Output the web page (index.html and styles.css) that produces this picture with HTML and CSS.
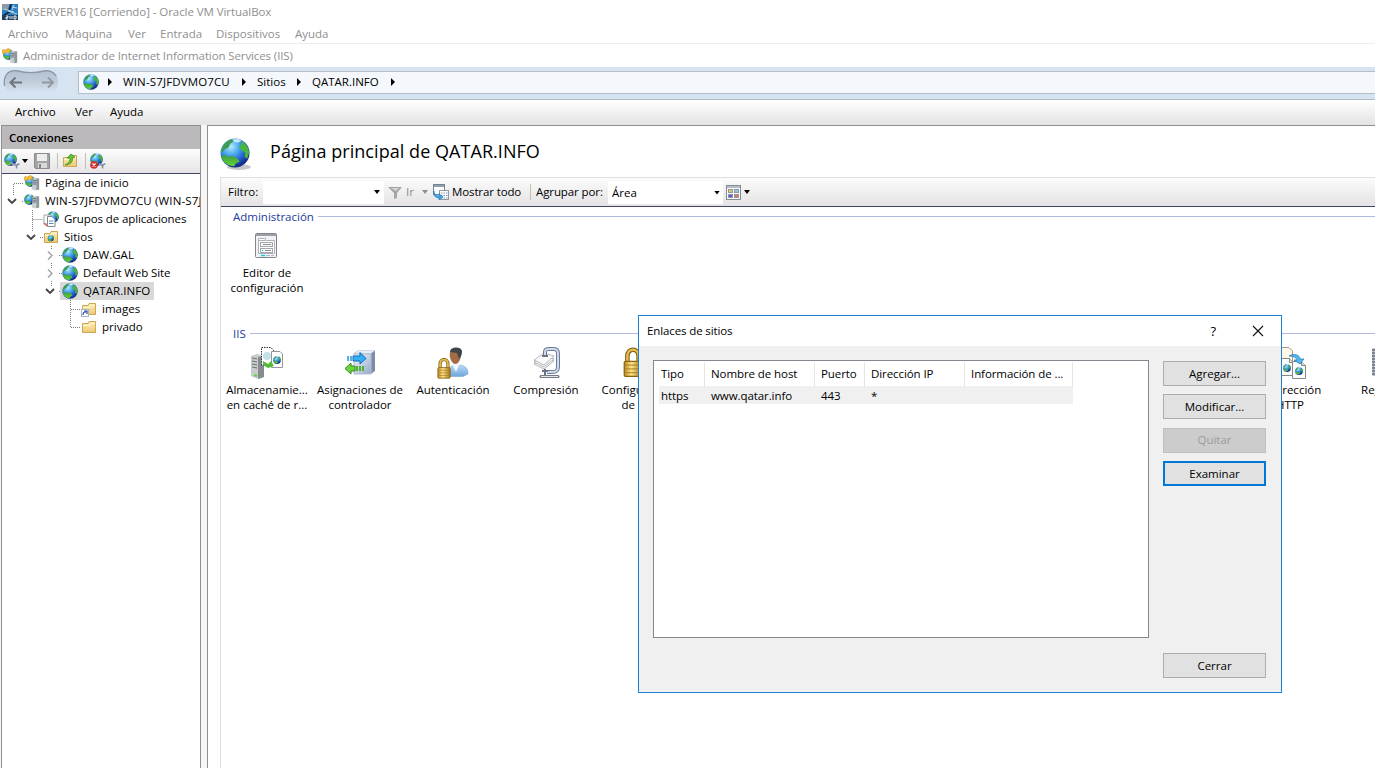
FILE: index.html
```html
<!DOCTYPE html>
<html lang="es">
<head>
<meta charset="utf-8">
<title>Administrador de Internet Information Services (IIS)</title>
<link rel="stylesheet" href="styles.css">
</head>
<body>
<svg class="defs" width="0" height="0" aria-hidden="true">
  <defs>
    <radialGradient id="sea" cx="36%" cy="28%" r="72%">
      <stop offset="0" stop-color="#b4ecff"/><stop offset=".4" stop-color="#4aa6ee"/><stop offset=".75" stop-color="#2357c8"/><stop offset="1" stop-color="#152c86"/>
    </radialGradient>
    <linearGradient id="land" x1="0" y1="0" x2="0" y2="1">
      <stop offset="0" stop-color="#3f9a4a"/><stop offset="1" stop-color="#5fd62f"/>
    </linearGradient>
    <linearGradient id="fold" x1="0" y1="0" x2="0" y2="1">
      <stop offset="0" stop-color="#fdeeb4"/><stop offset="1" stop-color="#ecca74"/>
    </linearGradient>
    <linearGradient id="gold" x1="0" y1="0" x2="1" y2="0">
      <stop offset="0" stop-color="#b98a1c"/><stop offset=".4" stop-color="#ffe58a"/><stop offset="1" stop-color="#a87712"/>
    </linearGradient>
    <linearGradient id="steel" x1="0" y1="0" x2="1" y2="1">
      <stop offset="0" stop-color="#f6f9fd"/><stop offset="1" stop-color="#93a7ca"/>
    </linearGradient>
    <linearGradient id="shirt" x1="0" y1="0" x2="0" y2="1">
      <stop offset="0" stop-color="#b9daf6"/><stop offset="1" stop-color="#6ea6dc"/>
    </linearGradient>
    <linearGradient id="nav" x1="0" y1="0" x2="0" y2="1">
      <stop offset="0" stop-color="#b3c0cf"/><stop offset=".5" stop-color="#c0cddb"/><stop offset="1" stop-color="#d9e5f2"/>
    </linearGradient>
    <symbol id="globe" viewBox="0 0 32 32">
      <circle cx="16" cy="16" r="15.500" fill="url(#sea)"/>
      <path d="M2 11C4 6 8 2 13 1L15 3 11 6 9 10 5 12 3 15 1 15Z" fill="#3f9a52"/>
      <path d="M1 19L6 18 8 20 13 19 19 22 21 25 17 27 15 30C8 30 3 26 1 19Z" fill="url(#land)"/>
      <path d="M23 3C28 6 31 11 31 16L29 22 26 20 27 16 23 13 20 9 23 7Z" fill="#48b53c"/>
      <path d="M13 1.500L20 1 23 3 19 5 15 4Z" fill="#e4f8ff" opacity=".8"/>
    </symbol>
    <symbol id="tower" viewBox="0 0 10 14">
      <path d="M2 1L6 0 9 1V13L5 14 1 13Z" fill="#c9cdd1"/>
      <path d="M6 1L9 1V13L6 14Z" fill="#8f969d"/>
      <path d="M2 3H6M2 5H6M2 7H6" stroke="#59626b"/>
      <path d="M7 11H8" stroke="#38d238" stroke-width="1.500"/>
    </symbol>
    <symbol id="site-server" viewBox="0 0 16 16">
      <use href="#globe" x="0" y="1" width="11" height="11"/>
      <use href="#tower" x="7" y="2" width="9" height="14"/>
    </symbol>
    <symbol id="home-server" viewBox="0 0 16 16">
      <use href="#globe" x="1" y="1" width="11" height="11"/>
      <use href="#tower" x="7" y="2" width="9" height="14"/>
      <path d="M0 3L1.500 1 3 2.500 6 .5 8.500 1.500 7 5 5 4 3 5 1 6Z" fill="#f7c13c" stroke="#cf8b18" stroke-width=".6"/>
    </symbol>
    <symbol id="folder" viewBox="0 0 16 16">
      <path d="M1.500 4.500H7L8 2.500H14.500V13.500H1.500Z" fill="url(#fold)" stroke="#cda656"/>
      <path d="M2 6.500H9L10 4.500H14" fill="none" stroke="#fff6d4"/>
    </symbol>
    <symbol id="lock" viewBox="0 0 16 24">
      <path d="M3.500 12V7C3.500 0 12.500 0 12.500 7V12" fill="none" stroke="#7c5a10" stroke-width="3.600"/>
      <path d="M3.500 12V7C3.500 0 12.500 0 12.500 7V12" fill="none" stroke="#e4bd4e" stroke-width="2"/>
      <rect x="1" y="11" width="14" height="12" rx="1" fill="url(#gold)" stroke="#8b6412"/>
      <path d="M2 14H14M2 17H14M2 20H14" stroke="#9f7620" opacity=".7"/>
    </symbol>
    <symbol id="doc-globe" viewBox="0 0 14 18">
      <path d="M.5.5H9.500L13.500 4.500V17.500H.5Z" fill="#fbfbfb" stroke="#85888c"/>
      <path d="M9.500.5V4.500H13.500" fill="#ddd" stroke="#85888c"/>
      <use href="#globe" x="3" y="6" width="8" height="8"/>
    </symbol>
  </defs>
</svg>

<header class="vm-title">
  <svg width="16" height="16" viewBox="0 0 16 16"><rect width="16" height="16" fill="#2e7fc0"/><path d="M0 0H8L5 6H0Z" fill="#8b9aa6"/><path d="M9 0L7 8 1 12" stroke="#0d2c4d" stroke-width="2" fill="none"/><path d="M6 7L15 10M10 3L15 4M2 5L12 8M12 1L10 6" stroke="#b9dcf1" fill="none"/><rect y="11" width="16" height="5" fill="#1d3f63"/><path d="M4 12H6V13.500H4V15H6M8 12V15M10 12V15M12 15V12H14V15Z" stroke="#fff" stroke-width=".9" fill="none"/></svg>
  <span class="t-vm">WSERVER16 [Corriendo] - Oracle VM VirtualBox</span>
</header>
<nav class="vm-menu">
  <span>Archivo</span><span>Máquina</span><span>Ver</span><span>Entrada</span><span>Dispositivos</span><span>Ayuda</span>
</nav>
<header class="iis-title">
  <svg width="16" height="16"><use href="#home-server"/></svg>
  <span class="t-iis">Administrador de Internet Information Services (IIS)</span>
</header>
<div class="address-row">
  <svg class="nav-buttons" width="60" height="28" viewBox="0 0 60 28">
    <path d="M4 14C4 4 10 1 18 3 26 5 36 5 44 3 53 1 58 6 58 14 58 23 51 27 43 25 35 23 27 23 19 25 10 27 4 23 4 14Z" fill="url(#nav)"/>
    <path d="M4.500 18C3 7 9 1 18 3 26 5 36 5 44 3 49 2 54 4 56 8" fill="none" stroke="#8e98a4" stroke-width="1.300"/>
    <path d="M10.500 14.500H22M15.500 9.500L10.500 14.500 15.500 19.500" fill="none" stroke="#70767d" stroke-width="2"/>
    <path d="M42 14.500H53M48 9.500L53 14.500 48 19.500" fill="none" stroke="#929aa4" stroke-width="2"/>
  </svg>
  <div class="breadcrumb">
    <svg width="16" height="16"><use href="#globe"/></svg>
    <i class="tri"></i><span class="c-host">WIN-S7JFDVMO7CU</span>
    <i class="tri"></i><span class="c-sites">Sitios</span>
    <i class="tri"></i><span class="c-site">QATAR.INFO</span>
    <i class="tri"></i>
  </div>
</div>
<nav class="iis-menu"><span>Archivo</span><span>Ver</span><span>Ayuda</span></nav>

<div class="workspace">
  <aside class="connections">
    <h2>Conexiones</h2>
    <div class="conn-tools">
      <svg width="16" height="16" viewBox="0 0 16 16"><use href="#globe" x="0" y="0" width="13" height="13"/><path d="M6 9Q9 12 13 12.500" stroke="#8fa0b2" stroke-width="2" fill="none"/><path d="M15.500 11Q12 11 12.500 15.500" stroke="#7b8b9c" stroke-width="1.500" fill="none"/></svg>
      <i class="drop"></i>
      <svg class="save" width="16" height="16" viewBox="0 0 16 16"><path d="M.5.5H15.500V15.500H1.500L.5 14Z" fill="#a4a4a4" stroke="#8b8b8b"/><rect x="3" y="1" width="10" height="7" fill="#ededed"/><rect x="4" y="10" width="9" height="5" fill="#d8d8d8"/><rect x="5" y="11" width="2" height="4" fill="#858585"/></svg>
      <i class="sep"></i>
      <svg class="up" width="16" height="16" viewBox="0 0 16 16"><use href="#folder"/><path d="M3 12C7 10 8 8 8 5H5L9 1 13 4 10.500 5C11 9 8 12 3 12Z" fill="#63c536" stroke="#348719" stroke-width=".7"/></svg>
      <i class="sep"></i>
      <svg width="16" height="16" viewBox="0 0 16 16"><use href="#globe" width="13" height="13"/><path d="M9 11L13 12.500" stroke="#8fa0b2" stroke-width="2"/><path d="M15.500 11Q12 11 12.500 15.500" stroke="#7b8b9c" stroke-width="1.500" fill="none"/><circle cx="4" cy="12" r="3.800" fill="#d32d2a"/><path d="M2.500 10.500L5.500 13.500M5.500 10.500L2.500 13.500" stroke="#fff" stroke-width="1.200"/></svg>
    </div>
    <div class="tree">
      <svg class="tree-lines" width="198" height="170" viewBox="0 0 198 170">
        <path d="M11.500 21V9.500H22M20 27.500H22M30.500 36V57M30.500 45.500H41M38 63.500H41M49.500 72V76M49.500 89V94M49.500 107V112M57 81.500H60M57 99.500H60M57 117.500H60M68.500 126V153.500H79M69 135.500H79" fill="none" stroke="#7c7c7c" stroke-dasharray="1 1"/>
      </svg>
      <div class="node l0"><i class="tw"></i><svg width="16" height="16"><use href="#home-server"/></svg><span>Página de inicio</span></div>
      <div class="node l0"><svg class="tw open" viewBox="0 0 10 10"><path d="M1 3L5 7 9 3"/></svg><svg width="16" height="16"><use href="#site-server"/></svg><span class="host">WIN-S7JFDVMO7CU (WIN-S7J</span></div>
      <div class="node l1"><i class="tw"></i><svg width="16" height="16" viewBox="0 0 16 16"><use href="#globe" x="4" y="0" width="12" height="12"/><path d="M1 4H8V13H1Z" fill="#fff" stroke="#9aa3ad"/><path d="M4.500 5.500H9L12 8.500V15.500H4.500Z" fill="#fff" stroke="#7c8793"/><path d="M6 10H10.500M6 12.500H10.500" stroke="#5689c3"/><path d="M1 12L4 15" stroke="#dd675a" stroke-width="1.500"/></svg><span class="pools">Grupos de aplicaciones</span></div>
      <div class="node l1"><svg class="tw open" viewBox="0 0 10 10"><path d="M1 3L5 7 9 3"/></svg><svg width="16" height="16" viewBox="0 0 16 16"><use href="#folder"/><use href="#globe" x="4.500" y="6" width="6.500" height="6.500"/></svg><span>Sitios</span></div>
      <div class="node l2"><svg class="tw" viewBox="0 0 10 10"><path d="M3 1.500L7 5.500 3 9.500"/></svg><svg width="16" height="16"><use href="#globe"/></svg><span>DAW.GAL</span></div>
      <div class="node l2"><svg class="tw" viewBox="0 0 10 10"><path d="M3 1.500L7 5.500 3 9.500"/></svg><svg width="16" height="16"><use href="#globe"/></svg><span class="pools">Default Web Site</span></div>
      <div class="node l2 selected"><svg class="tw open" viewBox="0 0 10 10"><path d="M1 3L5 7 9 3"/></svg><svg width="16" height="16"><use href="#globe"/></svg><span class="caps">QATAR.INFO</span></div>
      <div class="node l3"><i class="tw"></i><svg width="16" height="16" viewBox="0 0 16 16"><use href="#folder"/><rect x=".5" y="8.500" width="7" height="7" fill="#fff" stroke="#a5b6c9"/><path d="M2 14C2 11 3 11 5 11M3 10H6V13" stroke="#2546a8" fill="none" stroke-width="1.200"/></svg><span>images</span></div>
      <div class="node l3"><i class="tw"></i><svg width="16" height="16"><use href="#folder"/></svg><span>privado</span></div>
    </div>
  </aside>

  <main class="page">
    <div class="page-head">
      <svg width="32" height="34" viewBox="0 0 32 34"><ellipse cx="19" cy="30" rx="12" ry="3" fill="#a2a2a2" opacity=".6"/><use href="#globe" x="0" y="1" width="30" height="30"/></svg>
      <h1>Página principal de QATAR.INFO</h1>
    </div>
    <div class="feature-box">
      <div class="filter-bar">
        <span class="f1">Filtro:</span>
        <div class="combo filter"><i class="drop"></i></div>
        <svg class="funnel" width="14" height="13" viewBox="0 0 14 13"><path d="M0 1H14L9 7V12L6 13V7Z" fill="#a5a5a5"/><path d="M3 2H11L8 5Z" fill="#d4d4d4"/></svg>
        <span class="f2">Ir</span>
        <i class="drop dim"></i>
        <svg class="showall" width="16" height="16" viewBox="0 0 16 16"><rect x=".5" y=".5" width="11" height="10" fill="#fff" stroke="#758494"/><path d="M1 2H11" stroke="#91a0b1" stroke-width="2"/><rect x="6.500" y="6.500" width="9" height="9" fill="#fff" stroke="#9299a5"/><path d="M8 9H15M8 11.500H15M8 14H15" stroke="#7c8fb5" stroke-dasharray="1.500 1"/><path d="M1 7C1 10 3 12 6 12V9.500L10 13 6 16V14C2 14 0 11 1 7Z" fill="#35a2e6" stroke="#1872b7" stroke-width=".5"/></svg>
        <span class="f3">Mostrar todo</span>
        <i class="sep"></i>
        <span class="f4">Agrupar por:</span>
        <div class="combo area"><span>Área</span><i class="drop"></i></div>
        <svg class="views" width="15" height="15" viewBox="0 0 15 15"><rect x=".5" y=".5" width="14" height="14" fill="#f8f8f8" stroke="#858c97"/><path d="M1 2H14" stroke="#b6bcc5" stroke-width="2"/><g stroke="#9298a2"><rect x="2.500" y="4.500" width="4" height="3" fill="#dec65b"/><rect x="8.500" y="4.500" width="4" height="3" fill="#8ec8e4"/><rect x="2.500" y="9.500" width="4" height="3" fill="#5457d8"/><rect x="8.500" y="9.500" width="4" height="3" fill="#e37957"/></g></svg>
        <i class="drop"></i>
      </div>
      <section class="group admin">
        <h3><span>Administración</span></h3>
        <div class="items">
          <figure><svg width="32" height="32" viewBox="0 0 32 32"><rect x="4.500" y="3.500" width="21" height="24" rx="1" fill="#f1f2f3" stroke="#81868c"/><path d="M5 5H25" stroke="#9ba0a6" stroke-width="2"/><path d="M7.500 23.500V8.500H14.500V10.500H23.500V23.500Z" fill="#fff" stroke="#b0b4b9"/><path d="M8 10.500H14" stroke="#b0b4b9"/><rect x="9.500" y="12.500" width="12" height="4" fill="#fff" stroke="#a3a8ae"/><rect x="9.500" y="18.500" width="12" height="4" fill="#fff" stroke="#a3a8ae"/><path d="M11 20.500H12" stroke="#25aadc"/><path d="M14 20.500H20M12 14.500H20" stroke="#888d94"/><path d="M10 25.500H14" stroke="#16c4ec" stroke-width="1.500"/><path d="M15 25.500H23" stroke="#b5b9bd" stroke-dasharray="4 1"/></svg>
            <figcaption><span>Editor de</span><span>configuración</span></figcaption></figure>
        </div>
      </section>
      <section class="group iis">
        <h3><span>IIS</span></h3>
        <div class="items">
          <figure><svg width="32" height="32" viewBox="0 0 32 32"><path d="M0 9L6 7 13 9V30L7 32 0 29Z" fill="#c9cccd"/><path d="M7 10L13 9V30L7 32Z" fill="#858b8f"/><path d="M1 11L6 12M1 14L6 15M1 17L6 18M1 20L6 21" stroke="#6c7276"/><path d="M3 28L6 29" stroke="#54dd39" stroke-width="2"/><path d="M10.500 18V.5H20L23 4V18Z" fill="#fff" stroke="#333" stroke-dasharray="1.500 1"/><circle cx="16" cy="9" r="4" fill="#c4dfe7"/><path d="M20.500 4.500H29L31.500 7V20.500H20.500Z" fill="#fff" stroke="#94989c"/><use href="#globe" x="22" y="9" width="8" height="8"/><path d="M12 14L17 17 20 14 23 19 17 21 12 18Z" fill="#55ba36"/></svg>
            <figcaption><span>Almacenamie...</span><span>en caché de r...</span></figcaption></figure>
          <figure><svg width="32" height="32" viewBox="0 0 32 32"><path d="M10 6L14 3.500H31V24L27 27H10Z" fill="#7d8da7"/><path d="M10 7H27V27H10Z" fill="url(#steel)" stroke="#b4bfd4"/><path d="M10 6.500L14 3.500H31L27 6.500Z" fill="#e7edf6"/><path d="M9 9H16V5.500L22 11.500 16 17V14H9Z" fill="#35aff1" stroke="#0c6eb7"/><path d="M4 9V14M7 9V14" stroke="#2b93da" stroke-width="1.500"/><path d="M11 19H7V16L1 21.500 7 27V24H11Z" fill="#6cd43d" stroke="#34881e"/><path d="M13 19V24M16 19V24M19 19V24" stroke="#4fb132" stroke-width="2"/></svg>
            <figcaption><span>Asignaciones de</span><span>controlador</span></figcaption></figure>
          <figure><svg width="32" height="32" viewBox="0 0 32 32"><path d="M11 27C11 20 14 18 21 18 28 18 31 21 31 27L26 29.500H12Z" fill="url(#shirt)" stroke="#7ba3ca" stroke-width=".6"/><path d="M15 17L19 25 23 16Z" fill="#f5f8fb"/><path d="M13 5C14 1 24 0 24 6 24 12 22 17 18 17 14 16 12 10 13 5Z" fill="#a36c45"/><path d="M13 5C13-.5 24-1 25 4 25 9 23 11 22 12L20 6Z" fill="#3e464a"/><use href="#lock" x="0" y="11" width="14" height="21"/></svg>
            <figcaption><span>Autenticación</span></figcaption></figure>
          <figure><svg width="32" height="32" viewBox="0 0 32 32"><g fill="#fafafa" stroke="#94989c" stroke-width=".7"><path d="M4 17L14 22 24 14 14 9Z"/><path d="M4 15L14 20 24 12 14 8Z"/><path d="M4 13L14 18 24 9 14 6Z"/></g><path d="M15 9V5C15 2 17 2 19 2H24C27 2 28 4 28 7V20C28 24 26 25 22 25H17" fill="none" stroke="#6c7b96" stroke-width="4"/><path d="M15 9V5C15 2 17 2 19 2H24C27 2 28 4 28 7V20C28 24 26 25 22 25H17" fill="none" stroke="#d0daeb" stroke-width="2"/><path d="M12 9H18M15 22V29M12 24H18" stroke="#687281" stroke-width="2"/><path d="M11 29.500H28" stroke="#737a85" stroke-width="3" stroke-linecap="round"/><path d="M11 29.500H28" stroke="#e5e7e9"/></svg>
            <figcaption><span>Compresión</span></figcaption></figure>
          <figure class="ssl"><svg width="32" height="32" viewBox="0 0 32 32"><use href="#lock" x="0" y="0" width="20" height="31"/></svg>
            <figcaption><span>Configuración</span><span>de SSL</span></figcaption></figure>
          <figure class="redirect"><svg width="32" height="32" viewBox="0 0 32 32"><path d="M7.500.5H15L18.500 4V19H7.500Z" fill="#fff8e6" stroke="#9b9b92"/><use href="#doc-globe" x="6" y="11" width="14" height="18"/><use href="#doc-globe" x="18" y="14" width="14" height="18"/><path d="M15 9C20 6 26 8 26 12H30L26 17 20 13H23C22 10 19 9 15 9Z" fill="#55b7ee" stroke="#2078b1" stroke-width=".7"/></svg>
            <figcaption><span>Redirección</span><span>HTTP</span></figcaption></figure>
          <figure class="log"><svg width="32" height="32" viewBox="0 0 32 32"><rect x="6" y="2" width="23" height="26" fill="#cdd6e2" stroke="#7e8792"/><path d="M7 2V28" stroke="#7b8592" stroke-width="4" stroke-dasharray="2 1"/></svg>
            <figcaption><span>Registro</span></figcaption></figure>
        </div>
      </section>
    </div>
  </main>
</div>

<div class="dialog" role="dialog">
  <div class="dlg-title">
    <span class="d-title">Enlaces de sitios</span>
    <span class="help">?</span>
    <svg width="12" height="12" viewBox="0 0 12 12"><path d="M1 1L11 11M11 1L1 11" stroke="#111" stroke-width="1.100"/></svg>
  </div>
  <div class="dlg-body">
    <div class="bindings">
      <div class="brow head"><span>Tipo</span><span>Nombre de host</span><span>Puerto</span><span>Dirección IP</span><span>Información de ...</span></div>
      <div class="brow data"><span>https</span><span>www.qatar.info</span><span>443</span><span>*</span><span></span></div>
    </div>
    <div class="buttons">
      <button type="button">Agregar...</button>
      <button type="button">Modificar...</button>
      <button type="button" disabled>Quitar</button>
      <button type="button" class="focus">Examinar</button>
      <button type="button" class="close">Cerrar</button>
    </div>
  </div>
</div>
</body>
</html>
```
FILE: styles.css
```css
* { box-sizing: border-box; }
html, body { height: 100%; }
body {
  margin: 0;
  width: 1375px;
  height: 768px;
  overflow: hidden;
  position: relative;
  display: flex;
  flex-direction: column;
  background: #f6f6f6;
  color: #000;
  font: 11.5px/16px "Open Sans", "Noto Sans", sans-serif;
  white-space: nowrap;
}
svg { display: block; flex: none; }
.defs { position: absolute; }
h1, h2, h3, figure { margin: 0; font-weight: normal; }

.vm-title, .iis-title {
  display: flex;
  align-items: center;
  gap: 5px;
  height: 23px;
  padding-left: 2px;
  background: #fff;
  color: #8f8f8f;
}
.t-vm { letter-spacing: -.07px; }
.t-iis { letter-spacing: -.11px; }
.vm-menu {
  display: flex;
  align-items: center;
  height: 21px;
  padding: 2px 0 0 8px;
  background: #fff;
  border-bottom: 1px solid #ededed;
  color: #8f8f8f;
}
.vm-menu span:nth-child(1) { width: 57px; }
.vm-menu span:nth-child(2) { width: 63px; }
.vm-menu span:nth-child(3) { width: 32px; }
.vm-menu span:nth-child(4) { width: 56px; }
.vm-menu span:nth-child(5) { width: 79px; }

.address-row {
  display: flex;
  height: 33px;
  background: #d6e3f1;
  border-bottom: 1px solid #b0bac5;
}
.nav-buttons { margin: 1px 18px 0 0; }
.breadcrumb {
  flex: 1;
  display: flex;
  align-items: center;
  height: 23px;
  margin-top: 4px;
  padding: 0 0 1px 4px;
  background: #f4f8fc;
  border: 1px solid #b5bfca;
  border-right: 0;
}
.tri {
  flex: none;
  width: 4px;
  height: 8px;
  background: #000;
  clip-path: polygon(0 0, 100% 50%, 0 100%);
}
.breadcrumb .tri:nth-of-type(1) { margin: 0 11px 0 9px; }
.c-host { width: 119px; letter-spacing: .14px; }
.c-sites { width: 40px; margin-left: 11px; }
.c-site { width: 79px; margin-left: 11px; }

.iis-menu {
  display: flex;
  align-items: center;
  height: 25px;
  padding: 0 0 2px 15px;
  background: linear-gradient(#fff, #e3e3e3);
}
.iis-menu span:nth-child(1) { width: 60px; letter-spacing: .1px; }
.iis-menu span:nth-child(2) { width: 35px; }

.workspace { flex: 1; display: flex; min-height: 0; }
.connections {
  width: 200px;
  margin: 0 6px 0 1px;
  display: flex;
  flex-direction: column;
  border: 1px solid #8f8f8f;
  border-bottom: 0;
  background: #fff;
  overflow: hidden;
}
.connections h2 {
  height: 23px;
  padding-left: 7px;
  background: #bbb9bb;
  font-size: 11.5px;
  line-height: 23px;
  font-weight: 600;
}
.conn-tools {
  display: flex;
  align-items: center;
  height: 25px;
  padding-left: 2px;
  background: linear-gradient(#fcfcfc, #e6e4e6);
  border-bottom: 1px solid #3f4466;
}
.drop {
  flex: none;
  width: 6px;
  height: 4px;
  background: #000;
  clip-path: polygon(0 0, 100% 0, 50% 100%);
}
.dim { background: #8c8c8c; }
.conn-tools .drop { margin-left: 2px; }
.save { margin-left: 6px; }
.sep { flex: none; width: 1px; height: 16px; background: #c2c1a8; }
.conn-tools .sep { margin: 0 4px 0 7px; }

.tree { position: relative; }
.tree-lines { position: absolute; top: 0; left: 0; }
.node { position: relative; display: flex; align-items: center; height: 18px; }
.l0 { padding-left: 5px; }
.l1 { padding-left: 24px; }
.l2 { padding-left: 43px; }
.l3 { padding-left: 62px; }
.tw { flex: none; width: 10px; height: 10px; margin-right: 7px; }
.tw path { fill: none; stroke: #a5a5a5; stroke-width: 1.5; }
.tw.open path { stroke: #444; stroke-width: 1.8; }
.node span { line-height: 18px; padding: 0 3px 0 5px; }
.node .host { letter-spacing: .14px; }
.node .pools { letter-spacing: -.1px; }
.node .caps { letter-spacing: .05px; }
.selected { background: linear-gradient(#d9d9d9, #d9d9d9) 58px 0 / 94px 18px no-repeat; }

.page {
  flex: 1;
  min-width: 0;
  padding-left: 12px;
  display: flex;
  flex-direction: column;
  border-left: 1px solid #8f8f8f;
  border-top: 1px solid #8f8f8f;
  background: #fff;
}
.page-head { display: flex; height: 51px; padding: 11px 0 0; }
h1 { margin-left: 18px; font-size: 18px; line-height: 28px; letter-spacing: .05px; }
.feature-box {
  flex: 1;
  border-left: 1px solid #dedede;
  border-top: 1px solid #dedede;
}
.filter-bar {
  display: flex;
  align-items: center;
  height: 29px;
  padding-left: 7px;
  background: linear-gradient(#fcfcfc, #e4e2e4);
  border-bottom: 1px solid #3f4466;
}
.combo { display: flex; align-items: center; justify-content: flex-end; height: 23px; background: #fff; padding-right: 4px; }
.f1 { width: 35px; letter-spacing: -.05px; }
.filter { width: 121px; }
.funnel { margin: 0 4px 0 4px; }
.f2 { width: 16px; color: #8c8c8c; }
.showall { margin: 0 3px 0 5px; }
.f3 { width: 78px; letter-spacing: -.12px; }
.filter-bar .sep { margin-right: 5px; }
.f4 { width: 72px; letter-spacing: -.1px; }
.area { width: 115px; justify-content: space-between; padding: 1px 3px 0 4px; }
.views { margin: 0 3px; }

.group h3 {
  display: flex;
  align-items: center;
  gap: 4px;
  height: 20px;
  padding-left: 12px;
  font-size: 11.5px;
  color: #1e3a9c;
}
.group h3 { height: 19px; }
.group h3::after { content: ""; flex: 1; height: 1px; background: #b0b8dc; }
.admin { height: 117px; }
.items {
  display: grid;
  grid-template-columns: repeat(13, 93px);
  margin: 4px 0 0 -1px;
}
figure { display: flex; flex-direction: column; align-items: center; }
figcaption { display: flex; flex-direction: column; align-items: center; margin-top: 3px; padding-left: 1px; line-height: 15px; }
.redirect { grid-column: 12; }
.log { grid-column: 13; }

.dialog {
  position: absolute;
  left: 638px;
  top: 315px;
  width: 644px;
  height: 378px;
  border: 1px solid #1c7fd0;
  background: #f0f0f0;
  display: flex;
  flex-direction: column;
}
.dlg-title { display: flex; align-items: center; height: 30px; padding: 0 17px 0 8px; background: #fff; }
.d-title { letter-spacing: -.12px; }
.help { margin-left: auto; margin-right: 36px; font-size: 13px; }
.dlg-body { flex: 1; display: flex; justify-content: space-between; padding: 14px 15px 14px 14px; }
.bindings { width: 496px; height: 278px; background: #fff; border: 1px solid #828790; padding-top: 1px; }
.brow { display: grid; grid-template-columns: 51px 110px 50px 100px 108px; letter-spacing: -.08px; }
.head { height: 25px; line-height: 24px; }
.head span { border-right: 1px solid #e5e5e5; padding-left: 6px; }
.head span:first-child { padding-left: 7px; }
.data { width: 414px; height: 18px; margin-left: 5px; margin-top: -1px; background: #f0f0f0; line-height: 20px; grid-template-columns: 50px 110px 50px 100px 104px; }
.data span { padding-left: 2px; }
.buttons { display: flex; flex-direction: column; width: 103px; padding-top: 1px; }
button {
  height: 25px;
  margin: 0 0 8.4px;
  padding: 0;
  border: 1px solid #adadad;
  background: #e1e1e1;
  color: #000;
  font: inherit;
  line-height: 22px;
}
button:disabled { background: #ccc; border-color: #bfbfbf; color: #9b9b9b; }
.focus { border: 2px solid #0078d7; line-height: 20px; }
.close { margin: auto 0 0; }
```
